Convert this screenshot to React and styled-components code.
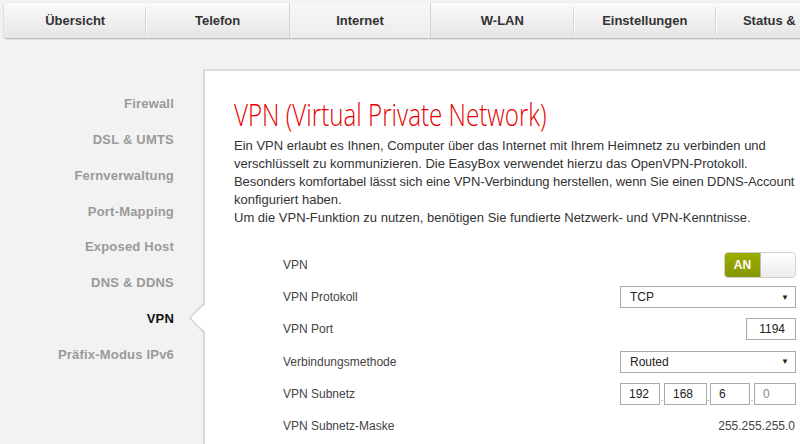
import React from "react";
import styled, { createGlobalStyle } from "styled-components";

const Global = createGlobalStyle`
  html, body { margin: 0; padding: 0; background: #f2f2f2; }
  body { font-family: "Liberation Sans", Arial, sans-serif; overflow: hidden; }
  * { box-sizing: border-box; }
`;

const Page = styled.div`
  width: 800px;
  height: 444px;
  overflow: hidden;
  background: #f2f2f2;
  display: flex;
  flex-direction: column;
`;

const TabBar = styled.div`
  display: flex;
  margin: 3px 0 0 4px;
  width: 900px;
  height: 35px;
  background: linear-gradient(#fbfbfb, #e5e5e5);
  border-radius: 3px 0 0 3px;
  box-shadow: 0 1px 2px rgba(0, 0, 0, 0.28);
  flex-shrink: 0;
`;

const Tab = styled.div`
  flex: 0 0 142.4px;
  display: flex;
  align-items: center;
  justify-content: ${(p) => (p.$last ? "flex-start" : "center")};
  padding-left: ${(p) => (p.$last ? "27px" : "0")};
  font-weight: bold;
  font-size: 13px;
  color: #333;
  position: relative;
  background: ${(p) => (p.$active ? "linear-gradient(#f7f7f7, #ececec)" : "transparent")};
  border-left: ${(p) => (p.$active ? "1px solid #d2d2d2" : "none")};
  border-right: ${(p) => (p.$active ? "1px solid #d2d2d2" : "none")};
  &::after {
    content: "";
    display: ${(p) => (p.$sep ? "block" : "none")};
    position: absolute;
    right: 0;
    top: 4px;
    bottom: 4px;
    width: 1px;
    background: #d6d6d6;
    box-shadow: 1px 0 0 #fff;
  }
`;

const Body = styled.div`
  display: flex;
  flex: 1;
  margin-top: 31px;
  min-height: 0;
`;

const Sidebar = styled.nav`
  flex: 0 0 203px;
  padding-top: 17px;
  display: flex;
  flex-direction: column;
`;

const NavItem = styled.div`
  height: 35.75px;
  display: flex;
  align-items: center;
  justify-content: flex-end;
  padding-right: 29px;
  font-weight: bold;
  font-size: 13px;
  letter-spacing: 0.2px;
  color: ${(p) => (p.$active ? "#111" : "#9a9a9a")};
  position: relative;
`;

const Notch = styled.svg`
  position: absolute;
  right: -3px;
  top: 50%;
  margin-top: -14px;
  z-index: 2;
`;

const Panel = styled.main`
  flex: 1;
  background: #fff;
  border-left: 2px solid #d8d8d8;
  border-top: 2px solid #dedede;
  padding: 24px 4px 0 29px;
  min-width: 0;
`;

const Title = styled.h1`
  margin: 0;
  font-family: "Open Sans", sans-serif;
  font-weight: 300;
  font-size: 32px;
  line-height: 38px;
  color: #e60000;
  white-space: nowrap;
  display: inline-block;
  transform: scaleX(0.755);
  transform-origin: left center;
`;

const Text = styled.p`
  margin: 4px 0 0;
  font-size: 13px;
  line-height: 18px;
  color: #333;
`;

const Line = styled.span`
  display: block;
  white-space: nowrap;
  letter-spacing: ${(p) => (p.$tight ? "-0.075px" : "0")};
`;

const Form = styled.div`
  margin-top: 22px;
  display: flex;
  flex-direction: column;
`;

const Row = styled.div`
  height: 32.2px;
  display: flex;
  align-items: center;
  justify-content: space-between;
  padding-left: 49px;
  font-size: 12px;
  color: #444;
`;

const Toggle = styled.div`
  width: 72px;
  height: 26px;
  border-radius: 4px;
  display: flex;
  overflow: hidden;
  border: 1px solid #cfcfcf;
`;

const ToggleOn = styled.div`
  flex: 0 0 35px;
  background: linear-gradient(#9cad00, #869700);
  color: #fff;
  font-weight: bold;
  font-size: 12px;
  display: flex;
  align-items: center;
  justify-content: center;
`;

const ToggleKnob = styled.div`
  flex: 1;
  background: linear-gradient(#ffffff, #ececec);
  border-left: 1px solid #bdbdbd;
`;

const Select = styled.div`
  width: 176px;
  height: 22px;
  border: 1px solid #a9a9a9;
  background: #fff;
  display: flex;
  align-items: center;
  justify-content: space-between;
  padding: 0 6px 0 9px;
  font-size: 12px;
  color: #222;
`;

const Arrow = styled.span`
  font-size: 8px;
  color: #222;
`;

const Box = styled.div`
  width: ${(p) => p.$w}px;
  height: 22px;
  border: 1px solid #a9a9a9;
  background: #fff;
  display: flex;
  align-items: center;
  justify-content: ${(p) => (p.$right ? "flex-end" : "flex-start")};
  padding: ${(p) => (p.$right ? "0 10px 0 0" : "0 0 0 8px")};
  font-size: 12px;
  color: ${(p) => (p.$muted ? "#888" : "#222")};
`;

const IpGroup = styled.div`
  display: flex;
  align-items: flex-end;
`;

const Dot = styled.span`
  width: ${(p) => p.$w || 4}px;
  text-align: center;
  font-size: 10px;
  line-height: 14px;
  color: #888;
`;

const Value = styled.span`
  font-size: 12px;
  color: #444;
  padding-right: 1px;
`;

const tabs = ["Übersicht", "Telefon", "Internet", "W-LAN", "Einstellungen", "Status &"];
const nav = ["Firewall", "DSL & UMTS", "Fernverwaltung", "Port-Mapping", "Exposed Host", "DNS & DDNS", "VPN", "Präfix-Modus IPv6"];

export default function App() {
  return (
    <Page>
      <Global />
      <TabBar>
        {tabs.map((t, i) => (
          <Tab
            key={t}
            $active={t === "Internet"}
            $last={i === tabs.length - 1}
            $sep={i === 0 || i === 3 || i === 4}
          >
            {t}
          </Tab>
        ))}
      </TabBar>
      <Body>
        <Sidebar>
          {nav.map((n) => (
            <NavItem key={n} $active={n === "VPN"}>
              {n}
              {n === "VPN" && (
                <Notch width="17" height="28" viewBox="0 0 17 28">
                  <polygon points="17,0 1,14 17,28" fill="#fff" />
                  <polyline points="14,0.5 0.8,14 14,27.5" fill="none" stroke="#d4d4d4" strokeWidth="1.4" />
                </Notch>
              )}
            </NavItem>
          ))}
        </Sidebar>
        <Panel>
          <Title>VPN (Virtual Private Network)</Title>
          <Text>
            <Line>Ein VPN erlaubt es Ihnen, Computer über das Internet mit Ihrem Heimnetz zu verbinden und</Line>
            <Line>verschlüsselt zu kommunizieren. Die EasyBox verwendet hierzu das OpenVPN-Protokoll.</Line>
            <Line $tight>Besonders komfortabel lässt sich eine VPN-Verbindung herstellen, wenn Sie einen DDNS-Account</Line>
            <Line>konfiguriert haben.</Line>
            <Line>Um die VPN-Funktion zu nutzen, benötigen Sie fundierte Netzwerk- und VPN-Kenntnisse.</Line>
          </Text>
          <Form>
            <Row>
              <span>VPN</span>
              <Toggle>
                <ToggleOn>AN</ToggleOn>
                <ToggleKnob />
              </Toggle>
            </Row>
            <Row>
              <span>VPN Protokoll</span>
              <Select>
                <span>TCP</span>
                <Arrow>▼</Arrow>
              </Select>
            </Row>
            <Row>
              <span>VPN Port</span>
              <Box $w={50} $right>1194</Box>
            </Row>
            <Row>
              <span>Verbindungsmethode</span>
              <Select>
                <span>Routed</span>
                <Arrow>▼</Arrow>
              </Select>
            </Row>
            <Row>
              <span>VPN Subnetz</span>
              <IpGroup>
                <Box $w={40}>192</Box>
                <Dot>.</Dot>
                <Box $w={43}>168</Box>
                <Dot $w={3}>.</Dot>
                <Box $w={40}>6</Box>
                <Dot>.</Dot>
                <Box $w={42} $muted>0</Box>
              </IpGroup>
            </Row>
            <Row>
              <span>VPN Subnetz-Maske</span>
              <Value>255.255.255.0</Value>
            </Row>
          </Form>
        </Panel>
      </Body>
    </Page>
  );
}
